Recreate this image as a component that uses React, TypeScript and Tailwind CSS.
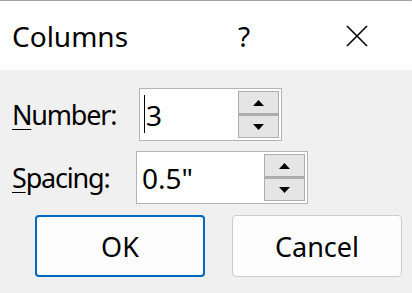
import React from "react";

function SpinButtons() {
  return (
    <div className="flex flex-col w-[41px] h-[47px] mr-[2px]">
      <div className="flex-1 flex items-center justify-center border border-[#adadad] bg-[#e5e5e5]">
        <svg width="11" height="6" viewBox="0 0 11 6">
          <polygon points="5.5,0 11,6 0,6" fill="#000" />
        </svg>
      </div>
      <div className="flex-1 flex items-center justify-center border border-t-2 border-[#adadad] bg-[#e5e5e5]">
        <svg width="11" height="6" viewBox="0 0 11 6">
          <polygon points="0,0 11,0 5.5,6" fill="#000" />
        </svg>
      </div>
    </div>
  );
}

function SpinField({ value, width, caret }: { value: string; width: string; caret?: boolean }) {
  return (
    <div className={`${width} h-[53px] flex items-center border border-[#b4b4b4] bg-white`}>
      <div className={`flex-1 flex items-center relative h-full ${caret ? "pl-[6px]" : "pl-[5px]"}`}>
        {caret && <div className="absolute left-[4px] top-[6px] w-px h-[38px] bg-black" />}
        <span>{value}</span>
      </div>
      <SpinButtons />
    </div>
  );
}

export default function App() {
  return (
    <div
      className="w-[412px] h-[293px] overflow-hidden bg-[#f0f0f0] text-black"
      style={{ fontFamily: '"Noto Sans", "Open Sans", sans-serif' }}
    >
      <div className="w-[420px] h-[70px] bg-white border-t border-r border-[#a0a0a0] rounded-tr-[10px] flex items-center text-[28px]">
        <span className="pl-[12px] w-[238px] leading-none">Columns</span>
        <span className="w-[106px] leading-none">?</span>
        <svg width="22" height="22" viewBox="0 0 22 22" className="ml-[2px]">
          <path d="M1 1 L21 21 M21 1 L1 21" stroke="#000" strokeWidth="1.6" />
        </svg>
      </div>

      <div className="flex flex-col pt-[18px] text-[28px] leading-none">
        <div className="flex items-center pl-[12px]">
          <span className="w-[127px] text-[27px] tracking-[-1.2px]">
            <span className="underline underline-offset-[4px] decoration-1">N</span>umber:
          </span>
          <SpinField value="3" width="w-[143px]" caret />
        </div>
        <div className="flex items-center pl-[12px] mt-[10px]">
          <span className="w-[124px] text-[27px] tracking-[-1.2px]">
            <span className="underline underline-offset-[4px] decoration-1">S</span>pacing:
          </span>
          <SpinField value={'0.5"'} width="w-[172px]" />
        </div>
        <div className="flex pl-[35px] mt-[11px] gap-[27px] text-[27px]">
          <button className="w-[170px] h-[62px] rounded-[4px] border-2 border-[#0067c0] bg-[#fdfdfd] flex items-center justify-center">
            OK
          </button>
          <button className="w-[170px] h-[62px] rounded-[4px] border border-[#cccccc] bg-[#fdfdfd] flex items-center justify-center">
            Cancel
          </button>
        </div>
      </div>
    </div>
  );
}
